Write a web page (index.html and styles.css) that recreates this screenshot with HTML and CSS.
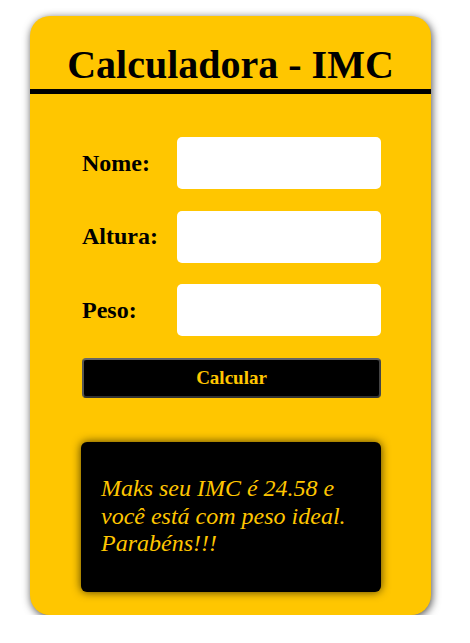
FILE: index.html
```html
<!DOCTYPE html>
<html lang="pt-BR">
<head>
<meta charset="utf-8">
<title>Calculadora - IMC</title>
<link rel="stylesheet" href="styles.css">
</head>
<body>
<main class="card">
  <h1 class="title">Calculadora - IMC</h1>
  <form class="form">
    <div class="row">
      <label class="label" for="nome">Nome:</label>
      <input class="input" id="nome" type="text">
    </div>
    <div class="row">
      <label class="label" for="altura">Altura:</label>
      <input class="input" id="altura" type="text">
    </div>
    <div class="row">
      <label class="label" for="peso">Peso:</label>
      <input class="input" id="peso" type="text">
    </div>
    <button class="button" type="button">Calcular</button>
  </form>
  <div class="result">
    <p class="result-text">Maks seu IMC é 24.58 e você está com peso ideal. Parabéns!!!</p>
  </div>
</main>
</body>
</html>
```

FILE: styles.css
```css
html, body {
  margin: 0;
  padding: 0;
  background: #ffffff;
}

body {
  font-family: "Liberation Serif", "Times New Roman", serif;
}

.card {
  box-sizing: border-box;
  width: 401px;
  height: 599px;
  margin: 16px 0 0 30px;
  background: #ffc600;
  border-radius: 20px;
  box-shadow: 1px 2px 8px rgba(0, 0, 0, 0.7);
  display: flex;
  flex-direction: column;
  overflow: hidden;
}

.title {
  margin: 0;
  padding: 26px 0 1px;
  font-size: 40px;
  line-height: 46px;
  font-weight: bold;
  text-align: center;
  color: #000;
  border-bottom: 5px solid #000;
}

.form {
  width: 299px;
  margin: 43px 0 0 52px;
  display: flex;
  flex-direction: column;
  gap: 21px;
}

.row {
  display: grid;
  grid-template-columns: 95px 204px;
  align-items: center;
}

.row + .row {
  margin-top: 0.5px;
}

.label {
  font-size: 24px;
  font-weight: bold;
  color: #000;
}

.input {
  box-sizing: border-box;
  width: 204px;
  height: 52px;
  border: none;
  border-radius: 5px;
  background: #fff;
  margin: 0;
}

.button {
  box-sizing: border-box;
  width: 299px;
  height: 40px;
  margin: 1px 0 0 0;
  background: #000;
  color: #ffc600;
  border: 2px solid;
  border-color: #666 #444 #333 #555;
  border-radius: 4px;
  font-family: "Liberation Serif", "Times New Roman", serif;
  font-size: 19px;
  font-weight: bold;
  cursor: pointer;
}

.result {
  box-sizing: border-box;
  width: 300px;
  height: 150px;
  margin: 44px 0 0 51px;
  padding: 33px 20px 0;
  background: #000;
  border-radius: 6px;
  box-shadow: 0 0 10px rgba(0, 0, 0, 0.7);
}

.result-text {
  margin: 0;
  font-size: 24px;
  font-style: italic;
  color: #ffc600;
  line-height: 27.6px;
}
```
